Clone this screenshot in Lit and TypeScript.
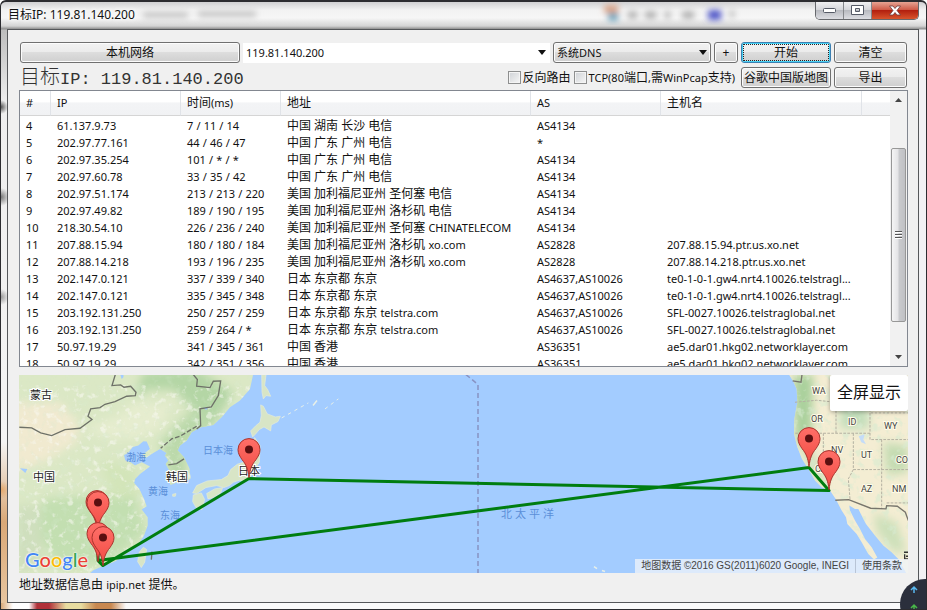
import { LitElement, html, svg, css } from "lit";
import { customElement, property } from "lit/decorators.js";

type Hop = [string, string, string, string, string, string];

const HOPS: Hop[] = [
  ["4", "61.137.9.73", "7 / 11 / 14", "中国 湖南 长沙 电信", "AS4134", ""],
  ["5", "202.97.77.161", "44 / 46 / 47", "中国 广东 广州 电信", "*", ""],
  ["6", "202.97.35.254", "101 / * / *", "中国 广东 广州 电信", "AS4134", ""],
  ["7", "202.97.60.78", "33 / 35 / 42", "中国 广东 广州 电信", "AS4134", ""],
  ["8", "202.97.51.174", "213 / 213 / 220", "美国 加利福尼亚州 圣何塞 电信", "AS4134", ""],
  ["9", "202.97.49.82", "189 / 190 / 195", "美国 加利福尼亚州 洛杉矶 电信", "AS4134", ""],
  ["10", "218.30.54.10", "226 / 236 / 240", "美国 加利福尼亚州 圣何塞 CHINATELECOM", "AS4134", ""],
  ["11", "207.88.15.94", "180 / 180 / 184", "美国 加利福尼亚州 洛杉矶 xo.com", "AS2828", "207.88.15.94.ptr.us.xo.net"],
  ["12", "207.88.14.218", "193 / 196 / 235", "美国 加利福尼亚州 洛杉矶 xo.com", "AS2828", "207.88.14.218.ptr.us.xo.net"],
  ["13", "202.147.0.121", "337 / 339 / 340", "日本 东京都 东京", "AS4637,AS10026", "te0-1-0-1.gw4.nrt4.10026.telstragl..."],
  ["14", "202.147.0.121", "335 / 345 / 348", "日本 东京都 东京", "AS4637,AS10026", "te0-1-0-1.gw4.nrt4.10026.telstragl..."],
  ["15", "203.192.131.250", "250 / 257 / 259", "日本 东京都 东京 telstra.com", "AS4637,AS10026", "SFL-0027.10026.telstraglobal.net"],
  ["16", "203.192.131.250", "259 / 264 / *", "日本 东京都 东京 telstra.com", "AS4637,AS10026", "SFL-0027.10026.telstraglobal.net"],
  ["17", "50.97.19.29", "341 / 345 / 361", "中国 香港", "AS36351", "ae5.dar01.hkg02.networklayer.com"],
  ["18", "50.97.19.29", "342 / 351 / 356", "中国 香港", "AS36351", "ae5.dar01.hkg02.networklayer.com"],
];

/* Latin runs are set one size below the Chinese text around them. */
const mixed = (text: string) =>
  text
    .split(/([\x21-\x7e]+)/)
    .map((part) => (/^[\x21-\x7e]/.test(part) ? html`<span class="lat">${part}</span>` : part));

const shared = css`
  * { box-sizing: border-box; }
  .lat { font-size: 11px; }
  button, input, select { font: inherit; color: inherit; margin: 0; }
`;

@customElement("hop-table")
export class HopTable extends LitElement {
  @property({ attribute: false }) hops: Hop[] = [];

  static styles = [
    shared,
    css`
      :host {
        display: flex;
        min-height: 0;
        overflow: hidden;
        background: #fff;
        border: 1px solid #828790;
      }
      .view { flex: 1; min-width: 0; overflow: hidden; }
      table { width: 100%; border-collapse: separate; border-spacing: 0; table-layout: fixed; }
      th, td {
        padding: 0 0 0 6px;
        text-align: left;
        font-weight: 400;
        white-space: nowrap;
        overflow: hidden;
      }
      th {
        height: 24px;
        line-height: 24px;
        background: linear-gradient(#fff 45%, #f3f4f6 50%, #f1f2f4);
        border-bottom: 1px solid #d5d5d5;
        border-right: 1px solid #e0e3e8;
      }
      th:last-child { border-right: 0; }
      td { height: 17px; line-height: 17px; }
      tbody::before { content: ""; display: table-row; height: 1px; }
      .c-no { width: 31px; }
      .c-ip { width: 130px; }
      .c-ms { width: 100px; }
      .c-addr { width: 250px; }
      .c-host { width: 201px; }
      .bar {
        width: 17px;
        display: flex;
        flex-direction: column;
        background: #f1f1f1;
        padding: 0 1px;
      }
      .arrow { height: 17px; flex: none; border: 0; padding: 0; background: none; display: grid; place-items: center; }
      .track { flex: 1; display: flex; flex-direction: column; }
      .above { flex: 40; }
      .below { flex: 27; }
      .thumb {
        flex: 173;
        display: grid;
        place-items: center;
        border: 1px solid #979797;
        border-radius: 2px;
        background: linear-gradient(90deg, #f5f5f5, #e4e4e6 45%, #c9cacd 55%, #bfc0c4);
      }
    `,
  ];

  render() {
    return html`
      <div class="view">
        <table>
          <colgroup>
            <col class="c-no" /><col class="c-ip" /><col class="c-ms" /><col class="c-addr" />
            <col class="c-ip" /><col class="c-host" /><col />
          </colgroup>
          <thead>
            <tr>
              ${["#", "IP", "时间(ms)", "地址", "AS", "主机名", ""].map((h) => html`<th>${mixed(h)}</th>`)}
            </tr>
          </thead>
          <tbody>
            ${this.hops.map((hop) => html`<tr>${hop.map((c) => html`<td>${mixed(c)}</td>`)}<td></td></tr>`)}
          </tbody>
        </table>
      </div>
      <div class="bar">
        <button class="arrow" aria-label="向上滚动">
          <svg width="7" height="4"><path d="M0 4 3.500 0 7 4z" fill="#444" /></svg>
        </button>
        <div class="track">
          <div class="above"></div>
          <div class="thumb">
            <svg width="7" height="8"><path d="M0 .5h7M0 3.500h7M0 6.500h7" stroke="#555" /><path d="M0 1.500h7M0 4.500h7M0 7.500h7" stroke="#fff" /></svg>
          </div>
          <div class="below"></div>
        </div>
        <button class="arrow" aria-label="向下滚动">
          <svg width="7" height="4"><path d="M0 0 3.500 4 7 0z" fill="#444" /></svg>
        </button>
      </div>
    `;
  }
}

const COUNTRY: [number, number, string][] = [
  [30, 398, "蒙古"], [33, 480, "中国"], [166, 480, "韩国"], [238, 474, "日本"],
];
const SEA: [number, number, string][] = [
  [126, 460, "渤海"], [203, 453, "日本海"], [148, 494, "黄海"], [160, 518, "东海"],
];
const STATES: [number, number, string][] = [
  [812, 393, "WA"], [811, 421, "OR"], [848, 424, "ID"], [884, 428, "WY"], [831, 452, "NV"],
  [861, 457, "UT"], [896, 462, "CO"], [815, 471, "CA"], [861, 491, "AZ"], [892, 491, "NM"],
];
const PINS: [number, number][] = [
  [97, 529], [98, 530], [98, 561], [103, 565], [249, 477], [809, 466], [829, 489],
];

@customElement("route-map")
export class RouteMap extends LitElement {
  static styles = [
    shared,
    css`
      :host { display: block; position: relative; overflow: hidden; min-height: 0; background: #a3ccff; }
      .world { display: block; width: 100%; height: 100%; position: absolute; inset: 0; }
      .country { font-size: 11px; fill: #222; stroke: #fff; stroke-width: 2px; paint-order: stroke; }
      .state { font: 9px Roboto, sans-serif; fill: #444; stroke: #fffbe8; stroke-width: 2px; paint-order: stroke; }
      .sea { font-size: 10px; fill: #5b8fd8; }
      .ocean { font-size: 11px; fill: #5b8fd8; }
      .full {
        position: absolute;
        top: 0;
        right: 0;
        width: 78px;
        height: 36px;
        padding: 0;
        border: 0;
        border-radius: 2px;
        background: #fff;
        box-shadow: 0 1px 4px rgba(0, 0, 0, 0.35);
        font-size: 16px;
        color: #111;
      }
      .logo {
        position: absolute;
        left: 6px;
        bottom: 1px;
        font: 500 20px/26px Lato, sans-serif;
        text-decoration: none;
        text-shadow: 0 0 2px #fff, 0 0 2px #fff, 0 0 1px #fff;
      }
      .b { color: #4285f4; } .r { color: #ea4335; } .y { color: #fbbc05; } .g { color: #34a853; }
      .credit {
        position: absolute;
        right: 0;
        bottom: 0;
        height: 14px;
        display: flex;
        font: 10px/14px "Liberation Sans", "Noto Sans CJK SC", sans-serif;
        color: #444;
        background: rgba(240, 244, 250, 0.75);
        white-space: nowrap;
      }
      .credit > * { padding: 0 6px; }
      .credit a { color: inherit; text-decoration: none; border-left: 1px solid #b8c4d6; }
    `,
  ];

  render() {
    return html`
      <svg class="world" viewBox="19 374 889 199" preserveAspectRatio="xMidYMid slice" aria-label="路由地图">
        <defs>
          <clipPath id="asia">
            <path d="M0 0H765L750 70 720 105 690 125 665 155 640 178 600 186 575 200 560 225 540 240 533 255 552 275 568 308 572 338 553 352 530 350 512 358 503 340 510 318 497 295 505 285 495 270 500 262 480 250 455 265 436 278 425 270 450 250 440 228 430 227 415 240 398 244 384 262 372 268 376 285 392 290 405 300 425 290 450 303 420 325 405 340 402 352 418 370 432 400 440 422 425 432 443 455 443 480 432 510 415 535 385 560 345 588 312 600 280 614 250 640H0z" />
          </clipPath>
          <clipPath id="america">
            <path d="M130 0 160 48 170 70 172 110 163 160 162 205 172 245 186 280 208 315 225 345 245 365 270 375 288 402 305 435 318 455 322 475 350 505 365 530 385 565 402 582 412 576 395 545 375 520 360 490 345 465 330 435 328 420 345 430 355 430 378 475 405 510 430 540 455 560 475 580 500 625H600V0z" />
          </clipPath>
          <filter id="soft" x="-20%" y="-20%" width="140%" height="140%"><feGaussianBlur stdDeviation="14" /></filter>
          <filter id="grain" x="0" y="0" width="100%" height="100%">
            <feTurbulence type="fractalNoise" baseFrequency=".05" numOctaves="3" seed="8" />
            <feColorMatrix values="0 0 0 0 .95  0 0 0 0 .95  0 0 0 0 .9  5 0 0 0 -2.800" />
          </filter>
          <filter id="forest" x="0" y="0" width="100%" height="100%">
            <feTurbulence type="fractalNoise" baseFrequency=".04" numOctaves="3" seed="21" />
            <feColorMatrix values="0 0 0 0 .68  0 0 0 0 .83  0 0 0 0 .64  0 5 0 0 -2.700" />
          </filter>
          <linearGradient id="pin" x1="0" y1="0" x2="0" y2="1">
            <stop offset="0" stop-color="#ff6f68" /><stop offset="1" stop-color="#f04a42" />
          </linearGradient>
        </defs>

        <g transform="translate(0 365) scale(.33333)">
          <g clip-path="url(#asia)">
            <path d="M0 0H800V700H0z" fill="#dbe8c5" />
            <g filter="url(#soft)">
              <path d="M40 110 180 110 240 180 230 230 130 290 40 320z" fill="#f1ead0" />
              <path d="M250 190 360 150 410 100 480 120 530 90 480 190 410 220 330 220z" fill="#e6edcf" />
              <path d="M430 20 590 10 700 80 640 180 580 130 520 70 440 70 400 110z" fill="#b4d6a5" />
              <path d="M480 230 590 120 640 180 560 250 560 350 510 350z" fill="#bbd9aa" />
              <path d="M130 400 400 380 440 500 330 590 180 610 110 500z" fill="#c3dfb1" />
              <path d="M300 290 400 300 420 390 340 400z" fill="#d3e5b9" />
              <path d="M50 420 120 420 130 600 50 620z" fill="#cfdfbd" />
            </g>
            <path d="M480 180 600 90 750 60 560 280zM50 350 240 240 350 230 300 330 330 500 250 620 50 620z" filter="url(#grain)" opacity=".55" />
            <path d="M120 380 340 350 450 470 300 620 60 610zM500 0H780V200L520 280z" filter="url(#forest)" opacity=".22" />
          </g>
          <g fill="#d8e5c6" stroke="#e6ecd9" stroke-width="2" stroke-linejoin="round">
            <path d="M785 20 799 20 794 60 803 72 812 92 798 90 790 100 786 80z" />
            <path d="M782 118 790 122 802 145 826 154 841 152 834 168 814 178 812 196 792 184 778 192 766 206 758 214 752 196 768 180 780 170 784 150z" />
            <path d="M764 216 780 240 778 290 756 325 748 340 732 346 718 344 700 350 688 360 672 366 650 360 618 366 590 384 578 382 590 360 622 346 664 342 684 330 692 312 712 296 742 286 762 250z" />
            <path d="M620 384 644 370 668 366 662 382 640 396 624 400zM580 388 604 382 614 402 606 432 588 426 578 408z" />
            <path d="M430 545 440 552 434 590 424 606 413 588 418 560z" />
            <path d="M518 386 528 384 526 392 518 392z" />
          </g>
          <path d="M845 157 925 112 M975 130 1015 100" stroke="#e8f0e8" stroke-width="3" stroke-dasharray="10 12" fill="none" />
          <path d="M361 28c10-4 14 4 4 12zM60 308l22 2-6 12zM610 124l14 4-6 6z" fill="#a3ccff" />
          <g fill="none" stroke="#6e7168" stroke-width="4">
            <path d="M58 185 95 187 122 202 155 210 195 192 240 188 276 162 264 152 272 130 300 126 315 116 345 108 380 92 406 90 408 80 392 62 372 65 362 58 336 60 346 27M580 27 592 42 590 62 630 66 640 47 662 46 655 90 634 124 600 130 602 180 590 190" />
            <path d="M590 182 540 212 515 220 482 248" stroke-dasharray="14 6" />
            <path d="M505 298 530 294 552 280M456 558 454 582" />
          </g>
        </g>

        <g transform="translate(740 365) scale(.33333)">
          <g clip-path="url(#america)">
            <path d="M0 0H600V700H0z" fill="#f4edd3" />
            <g filter="url(#soft)">
              <path d="M160 27 220 27 215 200 180 250 165 200z" fill="#a9d09b" />
              <path d="M300 100 380 110 390 190 300 190z" fill="#c3debb" />
              <path d="M430 230 505 240 505 320 440 330z" fill="#c5dcb2" />
              <path d="M180 240 210 250 260 360 240 360z" fill="#bcd9aa" />
              <path d="M400 440 470 470 500 560 460 560 410 500z" fill="#cde0ba" />
            </g>
            <path d="M160 20 230 20 220 210 200 260 250 370 230 380 160 250zM300 100H390V190H300zM425 130H520V330H430zM420 440 460 450 510 600 440 540z" filter="url(#forest)" opacity=".6" />
          </g>
          <path d="M356 212 374 206 370 222 378 236 364 230z" fill="#c4dcf8" />
          <path d="M165 110 230 104 268 108M288 135V203M166 203H392M250 203V270M340 203V312M390 130V222H505M340 312H505M425 222V428M392 142H505M340 312 325 340 330 400M440 412H505" stroke="#b4b1a2" stroke-width="3" stroke-dasharray="8 4" fill="none" />
          <path d="M158 46 183 50 186 27M286 404 326 402 392 428 438 430 440 420 472 422 496 440 505 465" stroke="#77756c" stroke-width="4" fill="none" />
          <path d="M492 560h14M494 566v14h12M498 572h8M492 580h14" stroke="#333" stroke-width="4" fill="none" />
        </g>

        <path d="M466 374 478 384V573" fill="none" stroke="#8893c4" stroke-width="1.500" stroke-dasharray="5 3" />
        <path d="M594 566l3 2M602 570l3 1M313 405l4-5" stroke="#e8f0e8" stroke-width="1.500" />

        ${SEA.map(([x, y, t]) => svg`<text class="sea" x=${x} y=${y}>${t}</text>`)}
        ${COUNTRY.map(([x, y, t]) => svg`<text class="country" x=${x} y=${y}>${t}</text>`)}
        ${STATES.map(([x, y, t]) => svg`<text class="state" x=${x} y=${y}>${t}</text>`)}
        ${[..."北太平洋"].map((t, i) => svg`<text class="ocean" x=${501 + i * 14} y="517">${t}</text>`)}

        <path d="M98 530V560L809 467 829 490 249 478 103 565 98 560" fill="none" stroke="#007d10" stroke-width="3" stroke-linejoin="round" />
        ${PINS.map(
          ([x, y]) => svg`<g transform="translate(${x} ${y})">
            <path d="M0 0C-1-9-3-13-7-18-9-21-11-24-11-28A11 11 0 0 1 11-28C11-24 9-21 7-18 3-13 1-9 0 0z" fill="url(#pin)" stroke="#a8322c" />
            <circle cy="-28" r="4" fill="#5a0f10" />
          </g>`
        )}
      </svg>
      <button class="full">全屏显示</button>
      <a class="logo" href="#google" aria-label="Google"><span class="b">G</span><span class="r">o</span><span class="y">o</span><span class="b">g</span><span class="g">l</span><span class="r">e</span></a>
      <div class="credit"><span>地图数据 ©2016 GS(2011)6020 Google, INEGI</span><a href="#terms">使用条款</a></div>
    `;
  }
}

@customElement("app-root")
export class AppRoot extends LitElement {
  static styles = [
    shared,
    css`
      :host {
        display: block;
        font: 12px/17px "Noto Sans", "Noto Sans CJK SC", sans-serif;
        color: #111;
      }
      .window {
        position: relative;
        overflow: hidden;
        height: 100vh;
        display: flex;
        flex-direction: column;
        padding: 0 7px 6px 6px;
        border: 1px solid #2c2c30;
        border-top-width: 2px;
        border-radius: 6px 6px 0 0;
        background:
          linear-gradient(#d0d0d2, #f2f2f2 8px, #f6f6f6 16px, #d4d4d4 24px, #8e8e8e 27px, transparent 28px),
          radial-gradient(circle at 0 105px, #555, transparent 7px),
          radial-gradient(circle at 0 195px, #777, transparent 9px),
          radial-gradient(circle at 0 295px, #999, transparent 8px),
          radial-gradient(circle at 0 488px, #e4a86c, transparent 9px),
          linear-gradient(90deg, #d9a877, #fff 12px, #fff 28px, #b03038 36px, #b03038 48px, #e8dca0 65px, #e8dca0 80px, #c88850 95px, #c88850 110px, #fafafa 125px) bottom / 100% 6px no-repeat,
          linear-gradient(90deg, transparent 50%, #f1f1f3 50%),
          linear-gradient(#aaa, #eee 100px, #f4f4f4 440px, #d9a877 520px, #e8c7a2);
      }
      .title { flex: none; height: 27px; display: flex; align-items: flex-start; }
      .title h1 { margin: 4px 0 0 1px; font: inherit; font-size: 12px; text-shadow: 0 0 6px #fff, 0 0 4px #fff; }
      .glass { flex: 1; height: 26px; min-width: 0; }
      .controls { display: flex; flex: none; height: 18px; border: 1px solid #66686c; border-top: 0; border-radius: 0 0 5px 5px; overflow: hidden; }
      .controls button {
        width: 28px;
        padding: 0;
        border: 0;
        border-right: 1px solid #85878b;
        background: linear-gradient(#f0f0f2, #d5d6da 45%, #b9bbc1 50%, #dcdde2);
        display: grid;
        place-items: center;
      }
      .controls .close { width: 46px; border: 0; background: linear-gradient(#e6a393, #cf5b48 45%, #b3200f 50%, #d8542c); }
      .client {
        flex: 1;
        min-height: 0;
        display: flex;
        flex-direction: column;
        padding: 12px 10px 9px 11px;
        border: 1px solid #55575a;
        background: #f0f0f0;
      }
      .row { flex: none; display: flex; align-items: center; gap: 3px; height: 21px; margin: 0 1px 4px; }
      .row:nth-child(2) { margin-bottom: 2px; }
      .btn {
        height: 21px;
        padding: 0;
        border: 1px solid #707070;
        border-radius: 3px;
        background: linear-gradient(#f2f2f2, #ebebeb 49%, #dddddd 50%, #cfcfcf);
        box-shadow: inset 0 0 0 1px #fcfcfc;
        line-height: 19px;
        white-space: nowrap;
        flex: none;
      }
      .local { width: 220px; }
      .plus { width: 24px; }
      .main { width: 90px; }
      .side { width: 73px; }
      .start { border-color: #3c7fb1; box-shadow: inset 0 0 0 1px #48d3f5; outline: 1px dotted #222; outline-offset: -3px; }
      .combo { flex: 1; min-width: 0; display: flex; align-items: center; height: 20px; background: #fff; }
      .combo input { flex: 1; min-width: 0; height: 20px; padding: 0 3px; border: 0; background: none; font-size: 11px; outline: 0; }
      .combo button { width: 17px; height: 20px; padding: 0; border: 0; background: none; display: grid; place-items: center; }
      .dns { position: relative; flex: none; width: 158px; height: 21px; }
      .dns select { width: 100%; appearance: none; padding: 0 3px; font-size: 11px; }
      .dns svg { position: absolute; right: 4px; top: 8px; pointer-events: none; }
      .target { flex: 1; margin: 0; font: 20px/21px "Noto Sans CJK SC", sans-serif; font-weight: 300; white-space: nowrap; color: #333; }
      .target .digits { font: 17px/21px "Liberation Mono", monospace; }
      .check { display: flex; align-items: center; gap: 2px; white-space: nowrap; }
      .check input {
        appearance: none;
        width: 13px;
        height: 13px;
        border: 1px solid #8e8f8f;
        background: linear-gradient(135deg, #cfd2d6, #f6f6f6);
        box-shadow: inset 0 0 0 1px #f4f4f4;
      }
      .checks { display: flex; gap: 3px; margin-right: 3px; }
      hop-table { flex: 276 1 0; }
      route-map { flex: 199 1 0; margin-top: 8px; }
      .foot { flex: none; margin: 3px 0 0; }
      .orb { position: absolute; right: -24px; bottom: -20px; width: 50px; height: 50px; }
    `,
  ];

  render() {
    const caret = svg`<path d="M0 0H8L4 5z" fill="#111" />`;
    return html`
      <div class="window">
        <header class="title">
          <h1>目标IP: 119.81.140.200</h1>
          <svg class="glass" viewBox="137 2 680 26" preserveAspectRatio="none" aria-hidden="true">
            <defs><filter id="haze" x="-50%" y="-100%" width="200%" height="300%"><feGaussianBlur stdDeviation="3" /></filter></defs>
            <g filter="url(#haze)">
              <path d="M145 15h45M200 14h58" stroke="#bbb" stroke-width="5" />
              <path d="M606 9h14" stroke="#d89a78" stroke-width="7" /><path d="M610 17h10" stroke="#6fa3bb" stroke-width="8" />
              <path d="M630 15h9M647 15h11M667 15h5M684 15h12M732 14h4" stroke="#aaa" stroke-width="7" />
              <path d="M710 15h13" stroke="#5159c8" stroke-width="10" />
            </g>
          </svg>
          <div class="controls">
            <button aria-label="最小化"><svg width="13" height="6"><rect x=".5" y=".5" width="12" height="4" rx="1" fill="#fff" stroke="#555a66" /></svg></button>
            <button aria-label="最大化"><svg width="13" height="11"><path d="M.5.5h12v9h-12zM4.500 3.500v3h4v-3z" fill="#fff" fill-rule="evenodd" stroke="#555a66" /></svg></button>
            <button class="close" aria-label="关闭"><svg width="14" height="12"><path d="M1.500 1h3.500l2 2.500L9 1h3.500L9 5.500l3.500 4.500H9L7 7.500 5 10H1.500L5 5.500z" fill="#fff" stroke="#6b3a3a" stroke-width=".8" /></svg></button>
          </div>
        </header>

        <main class="client">
          <div class="row">
            <button class="btn local">本机网络</button>
            <div class="combo">
              <input aria-label="目标地址" .value=${"119.81.140.200"} />
              <button aria-label="历史记录"><svg width="8" height="5">${caret}</svg></button>
            </div>
            <div class="dns">
              <select class="btn" aria-label="DNS"><option>系统DNS</option></select>
              <svg width="8" height="5">${caret}</svg>
            </div>
            <button class="btn plus">+</button>
            <button class="btn main start">开始</button>
            <button class="btn side">清空</button>
          </div>
          <div class="row">
            <h2 class="target">目标<span class="digits">IP: 119.81.140.200</span></h2>
            <div class="checks">
              <label class="check"><input type="checkbox" />反向路由</label>
              <label class="check"><input type="checkbox" /><span>${mixed("TCP(80端口,需WinPcap支持)")}</span></label>
            </div>
            <button class="btn main">谷歌中国版地图</button>
            <button class="btn side">导出</button>
          </div>
          <hop-table .hops=${HOPS}></hop-table>
          <route-map></route-map>
          <p class="foot">${mixed("地址数据信息由 ipip.net 提供。")}</p>
        </main>

        <svg class="orb" viewBox="0 0 50 50" aria-hidden="true">
          <circle cx="25" cy="25" r="25" fill="#2b2f3c" />
          <path d="M14 14V8M11 11l3-3 3 3" stroke="#58b8f0" stroke-width="1.500" fill="none" />
          <path d="M14 32v-6M11 29l3-3 3 3" stroke="#48b848" stroke-width="1.500" fill="none" />
        </svg>
      </div>
    `;
  }
}
